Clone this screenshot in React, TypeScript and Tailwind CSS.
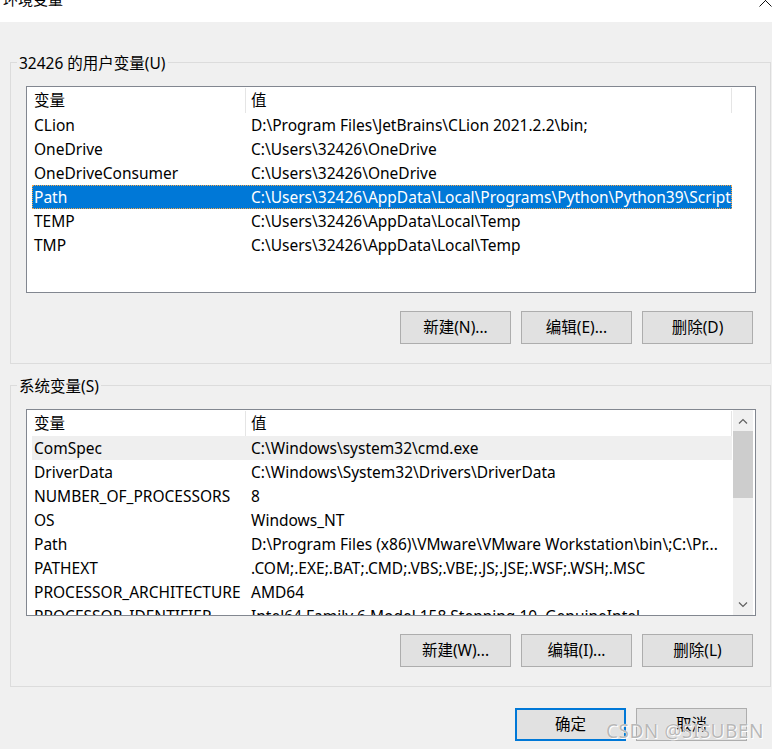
import React from 'react'

const userVars = [
  ['CLion', 'D:\\Program Files\\JetBrains\\CLion 2021.2.2\\bin;'],
  ['OneDrive', 'C:\\Users\\32426\\OneDrive'],
  ['OneDriveConsumer', 'C:\\Users\\32426\\OneDrive'],
  ['Path', 'C:\\Users\\32426\\AppData\\Local\\Programs\\Python\\Python39\\Scripts\\;C:\\Users\\32426'],
  ['TEMP', 'C:\\Users\\32426\\AppData\\Local\\Temp'],
  ['TMP', 'C:\\Users\\32426\\AppData\\Local\\Temp'],
]

const systemVars = [
  ['ComSpec', 'C:\\Windows\\system32\\cmd.exe'],
  ['DriverData', 'C:\\Windows\\System32\\Drivers\\DriverData'],
  ['NUMBER_OF_PROCESSORS', '8'],
  ['OS', 'Windows_NT'],
  ['Path', 'D:\\Program Files (x86)\\VMware\\VMware Workstation\\bin\\;C:\\Pr...'],
  ['PATHEXT', '.COM;.EXE;.BAT;.CMD;.VBS;.VBE;.JS;.JSE;.WSF;.WSH;.MSC'],
  ['PROCESSOR_ARCHITECTURE', 'AMD64'],
  ['PROCESSOR_IDENTIFIER', 'Intel64 Family 6 Model 158 Stepping 10, GenuineIntel'],
]

function Header() {
  return (
    <div className="flex h-[26px] w-[700px] items-center">
      <div className="w-[213px] pl-[2px] pt-[2px]">变量</div>
      <div className="mt-[1px] h-[25px] w-px self-start bg-[#e5e5e5]" />
      <div className="w-[485px] pl-[5px] pt-[2px]">值</div>
      <div className="mt-[1px] h-[25px] w-px self-start bg-[#e5e5e5]" />
    </div>
  )
}

function Row({ name, value, state }: { name: string; value: string; state?: 'selected' | 'hover' }) {
  const base = 'flex h-[24px] w-[700px] items-center whitespace-nowrap pt-[2px]'
  const cls =
    state === 'selected'
      ? `${base} bg-[#0078d7] text-white outline outline-1 outline-dotted outline-offset-[-1px] outline-[#f7a64a]`
      : state === 'hover'
        ? `${base} bg-[#efefef]`
        : base
  return (
    <div className={cls}>
      <div className="w-[213px] shrink-0 overflow-hidden pl-[2px]">{name}</div>
      <div className="w-[487px] shrink-0 overflow-hidden pl-[6px]">{value}</div>
    </div>
  )
}

function Chevron({ up }: { up?: boolean }) {
  return (
    <svg width="10" height="6" viewBox="0 0 10 6" className="text-[#606060]">
      <path
        d={up ? 'M1 5.5 L5 1.5 L9 5.5' : 'M1 0.5 L5 4.5 L9 0.5'}
        fill="none"
        stroke="currentColor"
        strokeWidth="1.2"
      />
    </svg>
  )
}

function Button({ label, primary }: { label: string; primary?: boolean }) {
  return (
    <div
      className={`flex h-[33px] w-[111px] items-center justify-center bg-[#e1e1e1] pt-px ${
        primary ? 'border-2 border-[#0078d7]' : 'border border-[#adadad]'
      }`}
    >
      {label}
    </div>
  )
}

function Group({ title, children }: { title: string; children: React.ReactNode }) {
  return (
    <div className="relative h-[302px] w-[761px] border border-[#dcdcdc] pl-[15px] pr-[14px] pt-[23px]">
      <div className="absolute left-[6px] top-[-11px] bg-[#f0f0f0] px-[2px] leading-[22px]">{title}</div>
      {children}
    </div>
  )
}

export default function App() {
  return (
    <div
      className="relative h-[749px] w-[772px] overflow-hidden bg-[#f0f0f0] text-[15.5px] text-black"
      style={{ fontFamily: '"Noto Sans", "Noto Sans CJK SC", sans-serif' }}
    >
      {/* title bar */}
      <div className="relative h-[22px] bg-white">
        <div className="absolute left-[3px] top-[-11px] text-[15px] leading-[20px]">环境变量</div>
        <svg width="13" height="13" viewBox="0 0 13 13" className="absolute right-[0px] top-[-6px]">
          <path d="M0.5 0.5 L12.5 12.5 M12.5 0.5 L0.5 12.5" stroke="#111" strokeWidth="1" />
        </svg>
      </div>

      <div className="flex flex-col pl-[10px] pt-[40px]">
        <Group title="32426 的用户变量(U)">
          <div className="h-[207px] w-[730px] overflow-hidden border border-[#828790] bg-white pl-[5px]">
            <Header />
            {userVars.map(([n, v]) => (
              <Row key={n} name={n} value={v} state={n === 'Path' ? 'selected' : undefined} />
            ))}
          </div>
          <div className="mt-[18px] flex w-[730px] justify-end gap-[10px] pr-[3px]">
            <Button label="新建(N)..." />
            <Button label="编辑(E)..." />
            <Button label="删除(D)" />
          </div>
        </Group>

        <div className="mt-[21px]">
          <Group title="系统变量(S)">
            <div className="flex h-[207px] w-[730px] overflow-hidden border border-[#828790] bg-white">
              <div className="w-[706px] pl-[5px]">
                <Header />
                {systemVars.map(([n, v]) => (
                  <Row key={n} name={n} value={v} state={n === 'ComSpec' ? 'hover' : undefined} />
                ))}
              </div>
              <div className="flex w-[20px] flex-col bg-[#f0f0f0]">
                <div className="flex h-[21px] items-center justify-center">
                  <Chevron up />
                </div>
                <div className="h-[67px] bg-[#cdcdcd]" />
                <div className="flex-1" />
                <div className="flex h-[21px] items-center justify-center">
                  <Chevron />
                </div>
              </div>
            </div>
            <div className="mt-[18px] flex w-[730px] justify-end gap-[10px] pr-[3px]">
              <Button label="新建(W)..." />
              <Button label="编辑(I)..." />
              <Button label="删除(L)" />
            </div>
          </Group>
        </div>

        <div className="mt-[21px] flex justify-end gap-[10px] pr-[25px]">
          <Button label="确定" primary />
          <Button label="取消" />
        </div>
      </div>

      {/* watermark */}
      <div
        className="absolute left-[606px] top-[717px] text-[19px] tracking-[0.5px] text-[#b8b8b8]"
        style={{ textShadow: '0 0 1px #fff, 1px 1px 0 #fff' }}
      >
        CSDN @SISUBEN
      </div>
    </div>
  )
}
